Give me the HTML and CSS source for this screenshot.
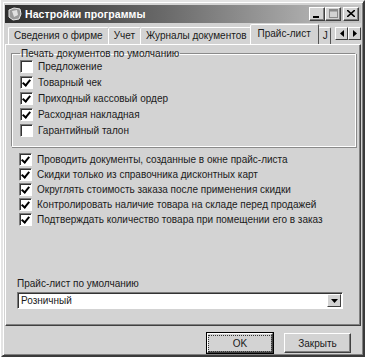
FILE: index.html
```html
<!DOCTYPE html>
<html lang="ru">
<head>
    <meta charset="UTF-8">
    <title>Настройки программы</title>
    <link rel="stylesheet" href="styles.css">
</head>
<body>

<div class="window">
    <div class="titlebar">
        <svg class="app-icon" width="16" height="16" viewBox="0 0 16 16">
            <path d="M2 4 L7 2 L13 3 L14 8 L12 13 L6 14 L2 11 Z" fill="#9a9a9a" stroke="#e8e8e8" stroke-width="1"/>
            <path d="M5 5 L10 4 L11 9 L7 11 Z" fill="#e0e0e0"/>
        </svg>
        <span class="title">Настройки программы</span>
        <div class="caption-btns">
            <span class="cbtn"><svg width="8" height="8" viewBox="0 0 8 8"><rect x="0" y="6" width="6" height="2" fill="#000"/></svg></span>
            <span class="cbtn"><svg width="9" height="9" viewBox="0 0 9 9"><rect x="0.5" y="0.5" width="8" height="8" fill="none" stroke="#8a8a8a"/><rect x="0.5" y="0.5" width="8" height="2" fill="#8a8a8a"/></svg></span>
            <span class="cbtn close"><svg width="8" height="7" viewBox="0 0 8 7"><path d="M0 0 L8 7 M8 0 L0 7" stroke="#000" stroke-width="1.6"/></svg></span>
        </div>
    </div>

    <div class="tabs">
        <span class="tab">Сведения о фирме</span>
        <span class="tab">Учет</span>
        <span class="tab">Журналы документов</span>
        <span class="tab active">Прайс-лист</span>
        <span class="tab cut">J</span>
        <div class="tab-scroll">
            <span class="sbtn"><svg width="4" height="7" viewBox="0 0 4 7"><path d="M4 0 L0 3.5 L4 7 Z" fill="#000"/></svg></span>
            <span class="sbtn"><svg width="4" height="7" viewBox="0 0 4 7"><path d="M0 0 L4 3.5 L0 7 Z" fill="#000"/></svg></span>
        </div>
    </div>

    <div class="panel">
        <fieldset class="group">
            <legend>Печать документов по умолчанию</legend>
            <label class="check"><span class="box"></span>Предложение</label>
            <label class="check"><span class="box on"></span>Товарный чек</label>
            <label class="check"><span class="box on"></span>Приходный кассовый ордер</label>
            <label class="check"><span class="box on"></span>Расходная накладная</label>
            <label class="check"><span class="box"></span>Гарантийный талон</label>
        </fieldset>

        <div class="options">
            <label class="check"><span class="box on"></span>Проводить документы, созданные в окне прайс-листа</label>
            <label class="check"><span class="box on"></span>Скидки только из справочника дисконтных карт</label>
            <label class="check"><span class="box on"></span>Округлять стоимость заказа после применения скидки</label>
            <label class="check"><span class="box on"></span>Контролировать наличие товара на складе перед продажей</label>
            <label class="check"><span class="box on"></span>Подтверждать количество товара при помещении его в заказ</label>
        </div>

        <div class="pricelist">
            <div class="field-label">Прайс-лист по умолчанию</div>
            <div class="combo">
                <span class="combo-text">Розничный</span>
                <span class="combo-btn"><svg width="7" height="4" viewBox="0 0 7 4"><path d="M0 0 L7 0 L3.5 4 Z" fill="#000"/></svg></span>
            </div>
        </div>
    </div>

    <div class="footer">
        <button class="btn default"><span>OK</span></button>
        <button class="btn">Закрыть</button>
    </div>
</div>

</body>
</html>
```

FILE: styles.css
```css
body { margin: 0; background: #fff; font-family: "Liberation Sans", Arial, sans-serif; font-size: 10px; color: #1a1a1a; }

.window { width: 356px; height: 349px; margin-left: 1px; background: #d3d3d3; border: 2px solid; border-color: #e4e4e4 #3a3a3a #3a3a3a #e4e4e4; box-shadow: inset 1px 1px 0 #fff, inset -1px -1px 0 #808080; padding: 2px; display: flex; flex-direction: column; }

.titlebar { height: 18px; display: flex; align-items: center; background: linear-gradient(to right, #2e2e2e, #6a6a6a 45%, #c4c4c4); padding: 0 2px; margin-top: 1px; }
.app-icon { margin-right: 2px; }
.title { color: #fff; font-weight: bold; font-size: 10.5px; flex: 1; letter-spacing: 0.1px; }
.caption-btns { display: flex; }
.cbtn { width: 14px; height: 12px; background: #d3d3d3; display: flex; align-items: center; justify-content: center; border: 1px solid; border-color: #fff #404040 #404040 #fff; box-shadow: inset -1px -1px 0 #808080; }
.cbtn.close { margin-left: 2px; }

.tabs { display: flex; align-items: flex-end; height: 20px; margin-top: 1px; padding-left: 3px; position: relative; }
.tab { height: 17px; line-height: 16px; padding: 0 5px; border: 1px solid; border-bottom: none; border-color: #fff #555 transparent #fff; border-radius: 2px 2px 0 0; box-sizing: border-box; white-space: nowrap; margin-right: -1px; }
.tab.active { height: 20px; line-height: 18px; margin: 0 -1px 0 -2px; padding: 0 7px; background: #d3d3d3; position: relative; z-index: 1; }
.tab.cut { width: 13px; overflow: hidden; padding: 0 0 0 4px; }
.tab-scroll { display: flex; position: absolute; right: 0; top: 3px; }
.sbtn { width: 13px; height: 13px; background: #d3d3d3; display: flex; align-items: center; justify-content: center; border: 1px solid; border-color: #fff #404040 #404040 #fff; box-sizing: border-box; }

.panel { height: 283px; box-sizing: border-box; border: 1px solid; border-color: #fff #404040 #404040 #fff; box-shadow: inset -1px -1px 0 #808080; padding: 0 8px 0 5px; display: flex; flex-direction: column; }

.group { margin: 3px -4px 0 0; padding: 0 0 7px 8px; border: 1px solid; border-color: #8a8a8a #fff #fff #8a8a8a; box-shadow: inset 1px 1px 0 #fff, 1px 1px 0 #8a8a8a; }
.group legend { padding: 0 1px; }
.group .check { height: 16px; }

.check { display: flex; align-items: center; height: 15px; white-space: nowrap; }
.box { width: 11px; height: 11px; background: #fff; border: 1px solid; border-color: #7a7a7a #fff #fff #7a7a7a; box-shadow: inset 1px 1px 0 #333; margin-right: 5px; position: relative; flex: none; }
.box.on::after { content: ""; position: absolute; left: 3px; top: 1px; width: 3px; height: 6px; border: solid #000; border-width: 0 2px 2px 0; transform: rotate(40deg); }

.options { margin-top: 5px; padding-left: 8px; }

.pricelist { margin-top: auto; margin-bottom: 16px; padding-left: 6px; }
.field-label { margin-bottom: 3px; }
.combo { width: 324px; height: 15px; background: #fff; border: 1px solid; border-color: #7a7a7a #fff #fff #7a7a7a; box-shadow: inset 1px 1px 0 #333; display: flex; align-items: center; justify-content: space-between; }
.combo-text { padding-left: 3px; }
.combo-btn { width: 14px; height: 13px; margin-right: 1px; background: #d3d3d3; display: flex; align-items: center; justify-content: center; border: 1px solid; border-color: #fff #404040 #404040 #fff; box-sizing: border-box; }

.footer { display: flex; justify-content: flex-end; gap: 11px; padding: 7px 10px 0 0; }
.btn { width: 67px; height: 20px; font-family: inherit; font-size: 10px; color: #1a1a1a; background: #d3d3d3; border: 1px solid; border-color: #fff #404040 #404040 #fff; box-shadow: inset -1px -1px 0 #808080; padding: 0; }
.btn.default { outline: 1px solid #000; width: 66px; }
.btn.default span { display: inline-block; padding: 2px 24px; outline: 1px dotted #333; }
```
